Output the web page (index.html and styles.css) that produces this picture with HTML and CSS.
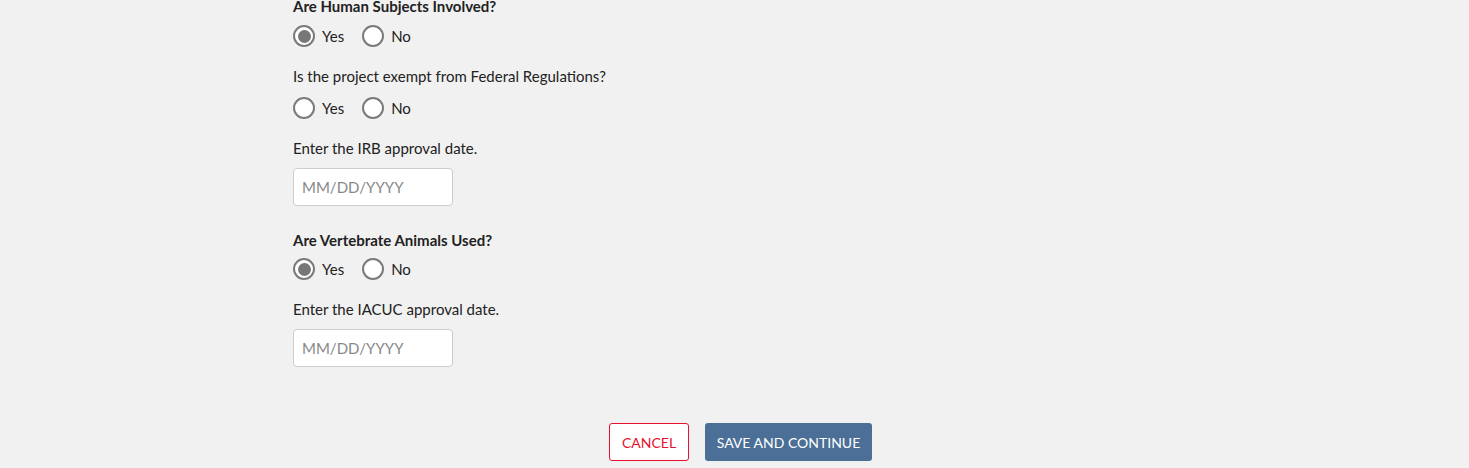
FILE: index.html
```html
<!DOCTYPE html>
<html lang="en">
<head>
  <meta charset="UTF-8" />
  <meta name="viewport" content="width=device-width, initial-scale=1.0"/>
  <title>Compliance</title>
  <link rel="stylesheet" href="styles.css">
</head>
<body>

<form class="page">
  <!-- Human subjects -->
  <p class="q strong">Are Human Subjects Involved?</p>
  <div class="radios">
    <label class="opt"><input type="radio" name="human" value="yes" checked> Yes</label>
    <label class="opt"><input type="radio" name="human" value="no"> No</label>
  </div>

  <p class="q">Is the project exempt from Federal Regulations?</p>
  <div class="radios">
    <label class="opt"><input type="radio" name="exempt" value="yes"> Yes</label>
    <label class="opt"><input type="radio" name="exempt" value="no"> No</label>
  </div>

  <label class="q" for="irb">Enter the IRB approval date.</label>
  <input class="date" type="text" id="irb" placeholder="MM/DD/YYYY" />

  <!-- Animals -->
  <p class="q strong tight">Are Vertebrate Animals Used?</p>
  <div class="radios">
    <label class="opt"><input type="radio" name="animals" value="yes" checked> Yes</label>
    <label class="opt"><input type="radio" name="animals" value="no"> No</label>
  </div>

  <label class="q" for="iacuc">Enter the IACUC approval date.</label>
  <input class="date" type="text" id="iacuc" placeholder="MM/DD/YYYY" />

  <div class="actions">
    <button type="button" class="btn cancel">Cancel</button>
    <button type="submit" class="btn save">Save and Continue</button>
  </div>
</form>

</body>
</html>
```

FILE: styles.css
```css
* {
  box-sizing: border-box;
  font-family: 'Lato', 'Liberation Sans', sans-serif;
}
body {
  margin: 0;
  background: #f1f1f1;
  color: #222;
  font-size: 15px;
  line-height: 22px;
  overflow: hidden;
}

.page {
  width: 883px;
  margin: -5px auto 0;
}

.q {
  display: block;
  margin: 0 0 10px;
}
.q.strong {
  font-weight: 700;
  margin-bottom: 8px;
}
.q.tight {
  margin-bottom: 7px;
}

.radios {
  display: flex;
  gap: 18px;
  margin-bottom: 18px;
}
.opt {
  display: flex;
  align-items: center;
  gap: 7px;
  cursor: pointer;
}
.opt input {
  appearance: none;
  -webkit-appearance: none;
  margin: 0;
  width: 22px;
  height: 22px;
  border: 2px solid #7a7a7a;
  border-radius: 50%;
  background: #fff;
  display: grid;
  place-content: center;
}
.opt input:checked::before {
  content: '';
  width: 13px;
  height: 13px;
  border-radius: 50%;
  background: #777;
}

.date {
  display: block;
  width: 160px;
  height: 38px;
  margin: -1px 0 23px;
  padding: 0 8px;
  border: 1px solid #ccc;
  border-radius: 4px;
  background: #fff;
  font-size: 15px;
  color: #222;
}
.date::placeholder {
  color: #888;
}

.actions {
  display: flex;
  justify-content: center;
  gap: 16px;
  padding-left: 12px;
  margin-top: 56px;
}
.btn {
  height: 38px;
  padding: 0;
  border-radius: 3px;
  font-size: 14px;
  text-transform: uppercase;
  cursor: pointer;
}
.cancel {
  width: 80px;
  background: #fff;
  color: #e8112d;
  border: 1px solid #e8112d;
}
.save {
  width: 167px;
  background: #4b6f97;
  color: #fff;
  border: none;
}
```
